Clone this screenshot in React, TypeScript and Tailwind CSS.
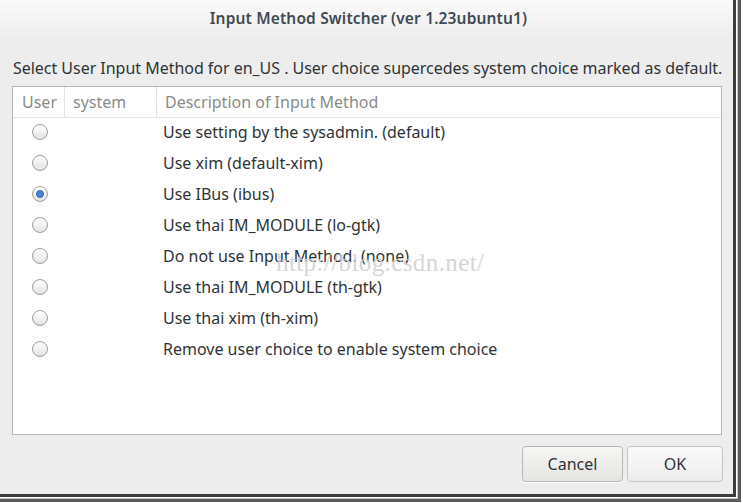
import React from "react";

const rows = [
  "Use setting by the sysadmin. (default)",
  "Use xim (default-xim)",
  "Use IBus (ibus)",
  "Use thai IM_MODULE (lo-gtk)",
  "Do not use Input Method. (none)",
  "Use thai IM_MODULE (th-gtk)",
  "Use thai xim (th-xim)",
  "Remove user choice to enable system choice",
];

function Radio({ checked }: { checked?: boolean }) {
  return (
    <div className="w-[16px] h-[16px] rounded-full border border-[#9b9d98] bg-gradient-to-b from-[#ffffff] to-[#e3e3e1] flex items-center justify-center shadow-[0_1px_0_rgba(255,255,255,0.8)]">
      {checked && (
        <div className="w-[8px] h-[8px] rounded-full bg-[#4a86cf] border border-[#2f66ad]" />
      )}
    </div>
  );
}

export default function App() {
  return (
    <div
      className="w-[743px] h-[503px] bg-white relative overflow-hidden"
      style={{ fontFamily: '"Noto Sans", "Open Sans", sans-serif' }}
    >
      <div className="w-[741px] h-[502px] border-r-[3px] border-b-[3px] border-[#5a5a5a]">
        <div className="w-[738px] h-[499px] border-r border-b border-[#c8c8c8] bg-white">
          <div className="w-[736px] h-[497px] border-r-[3px] border-b-[3px] border-[#3c3c3c]">
            <div className="w-[733px] h-[494px] bg-[#ededed] flex flex-col">
              <div className="h-[40px] shrink-0 bg-gradient-to-b from-[#fafafa] to-[#ededed] flex items-center justify-center">
                <span className="text-[15.5px] font-semibold text-[#3f4a52] tracking-[0.15px] mt-[-2px] ml-[4px] whitespace-nowrap">
                  Input Method Switcher (ver 1.23ubuntu1)
                </span>
              </div>
              <div className="h-[46px] shrink-0 flex items-center pl-[13px]">
                <span className="text-[16px] text-[#2e3436] tracking-[-0.03px] mt-[10px] whitespace-nowrap">
                  Select User Input Method for en_US . User choice supercedes system choice marked as default.
                </span>
              </div>
              <div className="ml-[12px] w-[710px] h-[349px] bg-white border border-[#b6b6b3] relative">
                <div className="h-[31px] flex items-center border-b border-[#e2e2e0] text-[16px] text-[#8a8c88]">
                  <div className="w-[52px] h-full flex items-center pl-[9px] border-r border-[#e2e2e0]">User</div>
                  <div className="w-[92px] h-full flex items-center pl-[8px] border-r border-[#e2e2e0]">system</div>
                  <div className="flex-1 h-full flex items-center pl-[8px]">Description of Input Method</div>
                </div>
                <div className="flex flex-col mt-[-2px]">
                  {rows.map((r, i) => (
                    <div key={i} className="h-[31px] flex items-center">
                      <div className="w-[52px] flex justify-center pl-[1px]">
                        <Radio checked={i === 2} />
                      </div>
                      <div className="w-[98px]" />
                      <span className="text-[16px] text-[#2e3436]">{r}</span>
                    </div>
                  ))}
                </div>
                <span
                  className="absolute left-[263px] top-[157px] text-[25px] text-[#d2d2d2] tracking-[0.4px] opacity-90 whitespace-nowrap"
                  style={{ fontFamily: '"Liberation Serif", serif' }}
                >
                  http://blog.csdn.net/
                </span>
              </div>
              <div className="flex justify-end gap-[4px] pr-[10px] pt-[11px]">
                <button className="w-[101px] h-[36px] rounded-[4px] border border-[#b8b8b5] bg-gradient-to-b from-[#f6f6f5] to-[#e4e4e2] text-[16px] text-[#2e3436] shadow-[0_1px_0_rgba(255,255,255,0.8)]">
                  Cancel
                </button>
                <button className="w-[96px] h-[36px] rounded-[4px] border border-[#c4c4c1] bg-gradient-to-b from-[#fbfbfb] to-[#ececeb] text-[16px] text-[#2e3436]">
                  OK
                </button>
              </div>
            </div>
          </div>
        </div>
      </div>
    </div>
  );
}
